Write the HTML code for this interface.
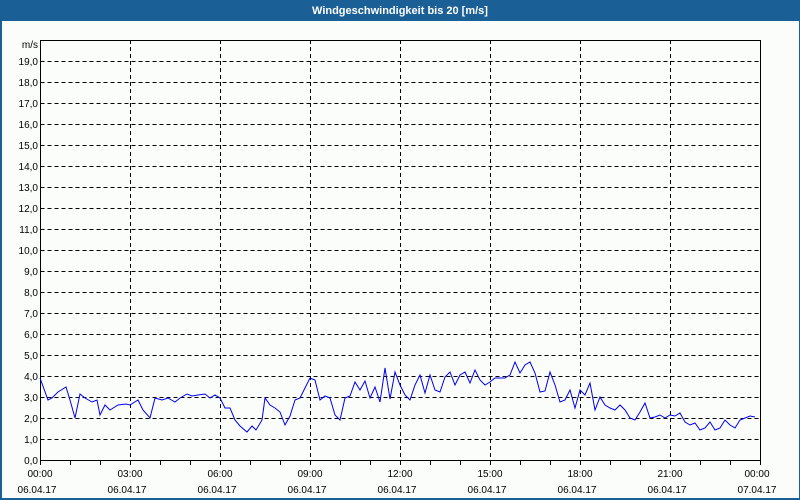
<!DOCTYPE html>
<html><head><style>
html,body{margin:0;padding:0;background:#fff;}
body{width:800px;height:500px;position:relative;overflow:hidden;font-family:"Liberation Sans",sans-serif;}
</style></head><body>
<svg width="800" height="500" xmlns="http://www.w3.org/2000/svg" style="position:absolute;left:0;top:0">
<rect x="0" y="0" width="800" height="500" fill="#1b5f97"/>
<rect x="2" y="21" width="797" height="477" fill="#fbfdfb"/>
<text x="400" y="14" fill="#fff" font-size="11" font-weight="bold" text-anchor="middle" font-family="Liberation Sans, sans-serif">Windgeschwindigkeit bis 20 [m/s]</text>
<g stroke="#000" stroke-width="1" stroke-dasharray="4,3" shape-rendering="crispEdges">
<path d="M40.5 61.5H760M40.5 82.5H760M40.5 103.5H760M40.5 124.5H760M40.5 145.5H760M40.5 166.5H760M40.5 187.5H760M40.5 208.5H760M40.5 229.5H760M40.5 250.5H760M40.5 271.5H760M40.5 292.5H760M40.5 313.5H760M40.5 334.5H760M40.5 355.5H760M40.5 376.5H760M40.5 397.5H760M40.5 418.5H760M40.5 439.5H760"/>
<path d="M130.5 40V460M220.5 40V460M310.5 40V460M400.5 40V460M490.5 40V460M580.5 40V460M670.5 40V460"/>
</g>
<g stroke="#000" stroke-width="1" shape-rendering="crispEdges" fill="none">
<path d="M40.5 460.5V40.5H760.5V460.5H40"/>
<path d="M40.5 460V465M70.5 460V465M100.5 460V465M130.5 460V465M160.5 460V465M190.5 460V465M220.5 460V465M250.5 460V465M280.5 460V465M310.5 460V465M340.5 460V465M370.5 460V465M400.5 460V465M430.5 460V465M460.5 460V465M490.5 460V465M520.5 460V465M550.5 460V465M580.5 460V465M610.5 460V465M640.5 460V465M670.5 460V465M700.5 460V465M730.5 460V465M760.5 460V465"/>
</g>
<polyline fill="none" stroke="#0000ee" stroke-width="1" points="40,378 48,400 52,398 58,392 66,387 70,400 75,418 80,394 85,398 92,402 97,400 100,415 105,405 110,410 118,405 126,404 130,405 138,400 143,410 150,418 155,398 162,400 168,398 175,402 180,398 187,394 192,396 198,395 205,394 210,398 215,395 220,398 225,408 230,408 235,420 240,426 247,432 252,426 256,430 262,420 265,398 270,405 275,408 280,412 285,425 290,416 295,400 300,398 305,388 310,378 315,380 320,400 325,396 330,398 335,415 340,420 345,398 350,396 355,382 360,390 365,381 370,398 375,387 380,402 385,368 390,399 395,372 400,385 405,395 410,400 415,385 420,375 425,393 430,375 435,390 440,392 445,377 450,372 455,385 460,375 465,372 470,383 475,370 480,380 485,385 490,382 495,378 500,378 505,378 510,375 515,362 520,373 525,365 530,362 535,373 540,392 545,391 550,372 555,385 560,402 565,400 570,390 575,408 580,390 585,395 590,383 595,410 600,397 605,405 610,408 615,410 620,405 625,410 630,418 635,420 640,412 645,403 650,418 655,417 660,415 665,418 670,415 675,416 680,413 685,422 690,425 695,423 700,430 705,428 710,422 715,430 720,428 725,420 730,425 735,428 740,420 745,418 750,416 755,417"/>
<g font-size="10" fill="#000" text-anchor="end" font-family="Liberation Sans, sans-serif">
<text x="38" y="48">m/s</text>
<text x="38" y="65">19,0</text><text x="38" y="86">18,0</text><text x="38" y="107">17,0</text><text x="38" y="128">16,0</text><text x="38" y="149">15,0</text><text x="38" y="170">14,0</text><text x="38" y="191">13,0</text><text x="38" y="212">12,0</text><text x="38" y="233">11,0</text><text x="38" y="254">10,0</text><text x="38" y="275">9,0</text><text x="38" y="296">8,0</text><text x="38" y="317">7,0</text><text x="38" y="338">6,0</text><text x="38" y="359">5,0</text><text x="38" y="380">4,0</text><text x="38" y="401">3,0</text><text x="38" y="422">2,0</text><text x="38" y="443">1,0</text><text x="38" y="464">0,0</text>
</g>
<g font-size="10" fill="#000" text-anchor="middle" font-family="Liberation Sans, sans-serif">
<text x="40" y="477">00:00</text><text x="130" y="477">03:00</text><text x="220" y="477">06:00</text><text x="310" y="477">09:00</text><text x="400" y="477">12:00</text><text x="490" y="477">15:00</text><text x="580" y="477">18:00</text><text x="670" y="477">21:00</text><text x="757" y="477">00:00</text>
<text x="37" y="493">06.04.17</text><text x="127" y="493">06.04.17</text><text x="217" y="493">06.04.17</text><text x="307" y="493">06.04.17</text><text x="397" y="493">06.04.17</text><text x="487" y="493">06.04.17</text><text x="577" y="493">06.04.17</text><text x="667" y="493">06.04.17</text><text x="757" y="493">07.04.17</text>
</g>
</svg>
</body></html>
